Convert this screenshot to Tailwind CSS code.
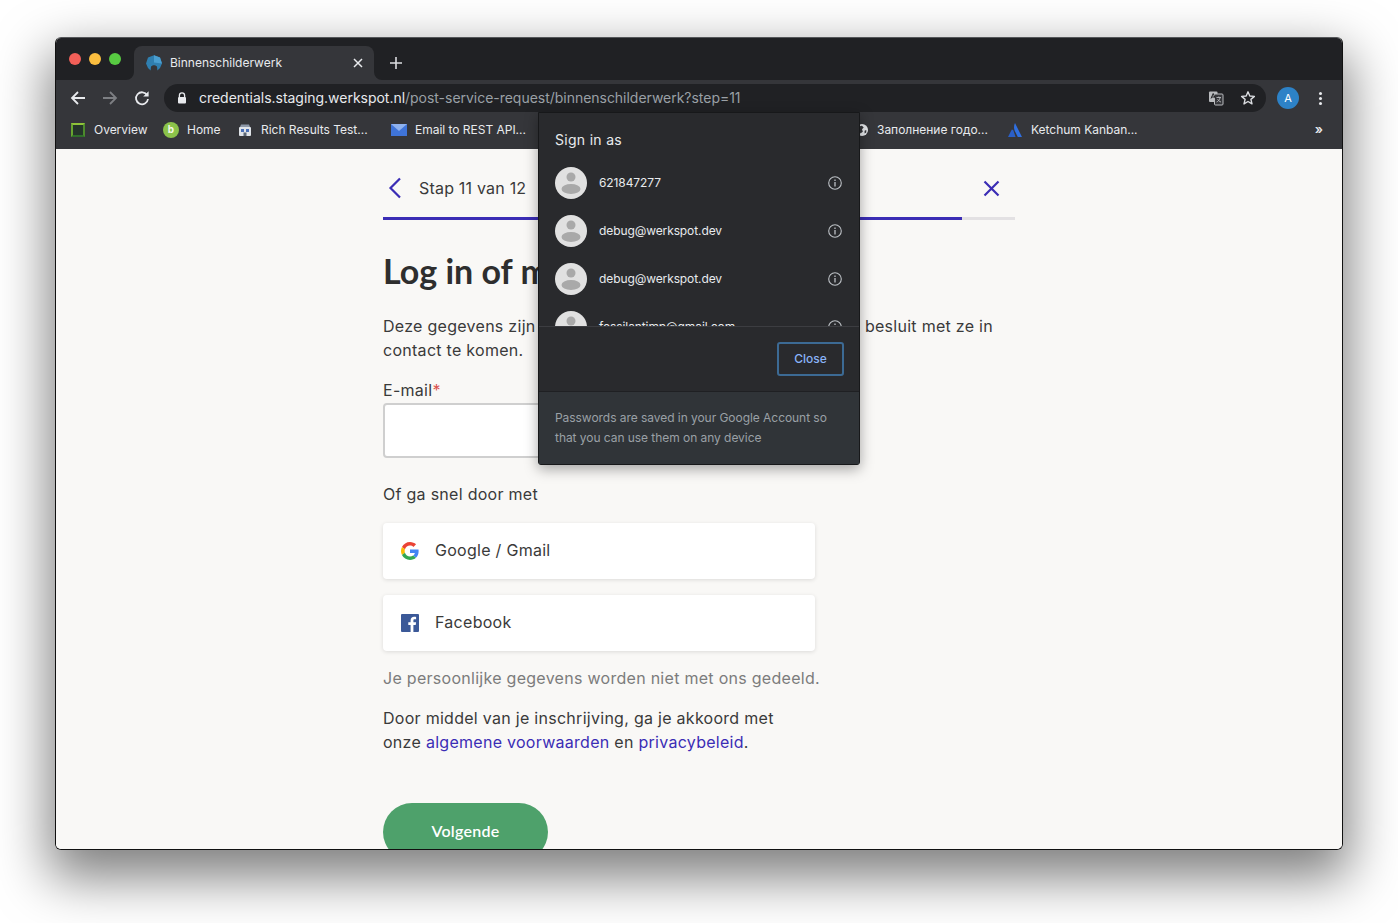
<!DOCTYPE html>
<html lang="en">
<head>
    <meta charset="UTF-8">
    <meta name="viewport" content="width=device-width, initial-scale=1.0">
    <title>Binnenschilderwerk</title>
    <script src="https://cdn.jsdelivr.net/npm/@tailwindcss/browser@4"></script>
</head>
<body class="bg-white h-[923px] overflow-hidden pt-[37px] font-['Inter',sans-serif]">
    <!-- Browser window -->
    <div class="relative mx-auto w-[1288px] h-[813px] flex flex-col rounded-[6px] overflow-hidden border border-[#111] border-t-[#55575a] shadow-[0_22px_52px_6px_rgba(0,0,0,0.5)]">

        <!-- Tab strip -->
        <div class="h-[42px] shrink-0 bg-[#202124] flex items-end">
            <div class="flex items-center gap-[8px] ml-[13px] mb-[15px] mr-[13px]">
                <span class="w-[12px] h-[12px] rounded-full bg-[#f25f58]"></span>
                <span class="w-[12px] h-[12px] rounded-full bg-[#fbbe3f]"></span>
                <span class="w-[12px] h-[12px] rounded-full bg-[#58cb42]"></span>
            </div>
            <div class="relative w-[240px] h-[34px] bg-[#35363a] rounded-t-[8px] flex items-center pl-[12px] pr-[11px] text-white">
                <svg class="absolute -left-[8px] bottom-0 w-[8px] h-[8px]" viewBox="0 0 8 8"><path d="M8 0V8H0A8 8 0 0 0 8 0Z" fill="#35363a"/></svg>
                <svg class="absolute -right-[8px] bottom-0 w-[8px] h-[8px]" viewBox="0 0 8 8"><path d="M0 0V8H8A8 8 0 0 1 0 0Z" fill="#35363a"/></svg>
                <svg class="w-[16px] h-[16px] shrink-0" viewBox="0 0 16 16"><path d="M8 0.2 14 2.6 16 8.400 14 13 11.400 15.400 11 11.400 9 10.200 7 10.200 5 11.400 4.600 15.400 2 13 0 8.400 2 2.600Z" fill="#2f7fb0"/><path d="M8 0.2 14 2.600 16 8.400 8 7.400Z" fill="#4a9ed0"/></svg>
                <span class="ml-[8px] text-[12px] text-[#e8eaed]">Binnenschilderwerk</span>
                <svg class="ml-auto w-[10px] h-[10px]" viewBox="0 0 10 10"><path d="M1 1 9 9M9 1 1 9" stroke="#e8eaed" stroke-width="1.500"/></svg>
            </div>
            <svg class="ml-[16px] mb-[11px] w-[12px] h-[12px]" viewBox="0 0 12 12"><path d="M6 0V12M0 6H12" stroke="#dcdde0" stroke-width="1.600"/></svg>
        </div>

        <!-- Toolbar -->
        <div class="h-[32px] shrink-0 bg-[#35363a] flex items-end">
            <div class="w-[108px] h-[28px] shrink-0 flex items-center pl-[14px] gap-[16px]">
                <svg class="w-[16px] h-[16px] shrink-0" viewBox="0 0 16 16"><path d="M15 8H2M8 2 2 8l6 6" fill="none" stroke="#e8eaed" stroke-width="1.800"/></svg>
                <svg class="w-[16px] h-[16px] shrink-0" viewBox="0 0 16 16"><path d="M1 8H14M8 2l6 6-6 6" fill="none" stroke="#7d7f83" stroke-width="1.800"/></svg>
                <svg class="w-[16px] h-[16px] shrink-0" viewBox="0 0 16 16"><path d="M13.200 5.200A6 6 0 1 0 14 9" fill="none" stroke="#e8eaed" stroke-width="1.800"/><path d="M14.600 1.200V6.600H9.200Z" fill="#e8eaed"/></svg>
            </div>
            <div class="w-[1102px] h-[28px] bg-[#202124] rounded-full flex items-center pl-[13px] pr-[10px]">
                <svg class="w-[10px] h-[12px] shrink-0" viewBox="0 0 10 12"><path d="M2.400 5V3.400a2.600 2.600 0 0 1 5.200 0V5" fill="none" stroke="#e8eaed" stroke-width="1.300"/><rect x="1" y="5" width="8" height="6.500" rx="1" fill="#e8eaed"/></svg>
                <span class="ml-[12px] mb-[2px] text-[14px] tracking-[-0.025px] text-[#e8eaed] whitespace-nowrap">credentials.staging.werkspot.nl<span class="text-[#9aa0a6]">/post-service-request/binnenschilderwerk?step=11</span></span>
                <svg class="ml-auto w-[16px] h-[16px] shrink-0" viewBox="0 0 16 16"><rect x="1" y="1.500" width="8.500" height="10.500" rx="1" fill="#b9bbbe"/><rect x="6.500" y="4" width="8.500" height="11" rx="1" fill="#35363a" stroke="#b9bbbe"/><path d="M3 8.500 5.200 3.500 7.400 8.500M3.800 7H6.600" fill="none" stroke="#202124"/><path d="M8.500 7.500H13M10.800 6.500V7.500M12.200 7.500C11.600 10 10 11.500 8.600 12M9.600 9.200C10.400 10.600 11.600 11.600 13 12" fill="none" stroke="#b9bbbe" stroke-width="0.900"/></svg>
                <svg class="ml-[16px] w-[16px] h-[16px] shrink-0" viewBox="0 0 16 16"><path d="M8 1.800 9.800 6l4.600.4-3.500 3 1.100 4.500L8 11.500l-4 2.400 1.100-4.500-3.500-3L6.200 6Z" fill="none" stroke="#dadce0" stroke-width="1.400" stroke-linejoin="round"/></svg>
            </div>
            <div class="flex-1 h-[28px] relative flex items-center pl-[11px]">
                <span class="w-[22px] h-[22px] rounded-full bg-[#2d82c7] text-white text-[11px] flex items-center justify-center">A</span>
                <span class="ml-[20px] flex flex-col gap-[2px]">
                    <span class="w-[3px] h-[3px] rounded-full bg-[#e8eaed]"></span>
                    <span class="w-[3px] h-[3px] rounded-full bg-[#e8eaed]"></span>
                    <span class="w-[3px] h-[3px] rounded-full bg-[#e8eaed]"></span>
                </span>
            </div>
        </div>

        <!-- Bookmarks bar -->
        <div class="h-[37px] shrink-0 bg-[#35363a] flex items-center pl-[15px] pb-[2px] text-[12px] tracking-[-0.02px] text-[#e8eaed] whitespace-nowrap">
            <div class="w-[92px] flex items-center shrink-0">
                <span class="w-[14px] h-[14px] border-[2px] border-l-[#67a52f] border-t-[#8fc33a] border-r-[#4d8b2c] border-b-[#2f6e2a] bg-[#24352a] shrink-0"></span>
                <span class="ml-[9px]">Overview</span>
            </div>
            <div class="w-[75px] flex items-center shrink-0">
                <span class="w-[16px] h-[16px] rounded-full bg-[#8bc34a] text-[#f4f8e8] text-[10px] font-bold flex items-center justify-center shrink-0">b</span>
                <span class="ml-[8px]">Home</span>
            </div>
            <div class="w-[153px] flex items-center shrink-0">
                <svg class="w-[14px] h-[14px] shrink-0" viewBox="0 0 14 14"><path d="M2 4 3 1.500H11L12 4Z" fill="#8d98a8"/><rect x="1" y="4" width="12" height="9" rx="1" fill="#dfe3e8"/><rect x="3" y="6" width="3" height="3" fill="#4a6fb5"/><rect x="8" y="6" width="3" height="3" fill="#4a6fb5"/><rect x="5.500" y="9.500" width="3" height="3.500" fill="#5b6675"/></svg>
                <span class="ml-[9px]">Rich Results Test...</span>
            </div>
            <div class="w-[465px] flex items-center shrink-0">
                <svg class="w-[16px] h-[12px] shrink-0" viewBox="0 0 16 12"><rect width="16" height="12" fill="#3f74d8"/><path d="M0 0 8 7 16 0" fill="#8fb2ee"/></svg>
                <span class="ml-[8px]">Email to REST API...</span>
            </div>
            <div class="w-[152px] flex items-center shrink-0">
                <svg class="w-[12px] h-[14px] shrink-0" viewBox="0 0 14 14"><circle cx="7" cy="7" r="7" fill="#e8eaed"/><path d="M3 3 7 2 9 4 7 6 8 9 5 11 4 7 2 6ZM10 8 12 7 12 10 10 11Z" fill="#35363a"/></svg>
                <span class="ml-[9px]">Заполнение годо...</span>
            </div>
            <div class="flex items-center shrink-0">
                <svg class="w-[14px] h-[14px] shrink-0" viewBox="0 0 14 14"><path d="M7 0C5.600 3 5.600 6 7.600 9.500L9.800 14H14Z" fill="#2f6fe0"/><path d="M3.800 6.500 0 14H7.600L5.200 7Z" fill="#2a5fc8"/></svg>
                <span class="ml-[9px]">Ketchum Kanban...</span>
            </div>
            <span class="ml-auto mr-[19px] text-[13px] font-semibold text-[#e8eaed]">»</span>
        </div>

        <!-- Page -->
        <div class="flex-1 min-h-0 overflow-hidden bg-[#f9f8f6]">
            <div class="mx-auto w-[632px] text-[16px] leading-[24px] tracking-[0.28px] text-[#3a3a3a]">
                <div class="h-[68px] pt-[10px] flex items-center">
                    <svg class="w-[14px] h-[22px] ml-[5px]" viewBox="0 0 14 22"><path d="M12 1.500 2.500 11l9.500 9.500" fill="none" stroke="#3b2db5" stroke-width="2.200"/></svg>
                    <span class="ml-[17px] tracking-[0.2px]">Stap 11 van 12</span>
                    <svg class="ml-auto mr-[15px] w-[17px] h-[17px]" viewBox="0 0 17 17"><path d="M1.500 1.500 15.500 15.500M15.500 1.500 1.500 15.500" stroke="#3b2db5" stroke-width="2.200"/></svg>
                </div>
                <div class="h-[3px] bg-[#e3e1e3]"><div class="w-[579px] h-[3px] bg-[#3b2db5]"></div></div>

                <h1 class="mt-[29px] text-[34px] leading-[44px] tracking-normal font-bold text-[#2e2e2e] font-['Lato',sans-serif]">Log in of maak een account</h1>
                <div class="mt-[21px] flex justify-between whitespace-nowrap pr-[22px]"><span>Deze gegevens zijn</span><span>besluit met ze in</span></div>
                <p>contact te komen.</p>

                <label class="block mt-[16px]">E-mail<span class="text-[#d9534f]">*</span></label>
                <div class="w-[432px] h-[55px] mt-[1px] bg-white border-2 border-[#cfcfcf] rounded-[4px]"></div>

                <p class="mt-[24px]">Of ga snel door met</p>
                <div class="w-[432px] mt-[17px] flex flex-col gap-[16px]">
                    <div class="h-[56px] bg-white rounded-[4px] shadow-[0_1px_4px_rgba(0,0,0,0.12)] flex items-center pl-[18px]">
                        <svg class="w-[18px] h-[18px]" viewBox="0 0 48 48"><path fill="#EA4335" d="M24 9.500c3.540 0 6.710 1.220 9.210 3.600l6.850-6.850C35.900 2.380 30.470 0 24 0 14.620 0 6.510 5.380 2.560 13.220l7.980 6.190C12.430 13.720 17.740 9.500 24 9.500z"/><path fill="#4285F4" d="M46.980 24.550c0-1.570-.15-3.090-.38-4.550H24v9.020h12.940c-.58 2.960-2.260 5.480-4.780 7.180l7.730 6c4.510-4.180 7.090-10.360 7.090-17.650z"/><path fill="#FBBC05" d="M10.530 28.590c-.48-1.450-.76-2.990-.76-4.590s.27-3.140.76-4.590l-7.980-6.190C.92 16.460 0 20.120 0 24c0 3.880.92 7.540 2.560 10.780l7.970-6.190z"/><path fill="#34A853" d="M24 48c6.480 0 11.930-2.130 15.890-5.810l-7.730-6c-2.150 1.450-4.920 2.300-8.160 2.300-6.260 0-11.570-4.220-13.470-9.910l-7.980 6.190C6.510 42.620 14.620 48 24 48z"/></svg>
                        <span class="ml-[16px] mb-[2px]">Google / Gmail</span>
                    </div>
                    <div class="h-[56px] bg-white rounded-[4px] shadow-[0_1px_4px_rgba(0,0,0,0.12)] flex items-center pl-[18px]">
                        <svg class="w-[18px] h-[18px]" viewBox="0 0 18 18"><rect width="18" height="18" rx="1" fill="#3b5998"/><path d="M12.400 18V11h2.300l.4-2.700h-2.700V6.600c0-.8.200-1.300 1.300-1.300h1.400V2.900c-.3 0-1.100-.1-2-.1-2.100 0-3.500 1.300-3.500 3.600v1.900H7.300V11h2.300v7Z" fill="#fff"/></svg>
                        <span class="ml-[16px] mb-[2px]">Facebook</span>
                    </div>
                </div>

                <p class="mt-[15px] text-[#7c7c7c] whitespace-nowrap">Je persoonlijke gegevens worden niet met ons gedeeld.</p>
                <p class="mt-[16px]">Door middel van je inschrijving, ga je akkoord met<br>onze <a class="text-[#3b2db5]">algemene voorwaarden</a> en <a class="text-[#3b2db5]">privacybeleid</a>.</p>
                <button class="mt-[49px] w-[165px] h-[58px] rounded-full bg-[#4ea16b] text-white font-semibold font-['Lato',sans-serif] pb-[2px]">Volgende</button>
            </div>
        </div>

        <!-- Password manager popup -->
        <div class="absolute left-[482px] top-[74px] w-[322px] h-[353px] bg-[#292a2d] border border-[#17181a] rounded-b-[3px] shadow-[0_4px_14px_rgba(0,0,0,0.35)] flex flex-col text-[#e8eaed]">
            <div class="text-[14px] tracking-[0.3px] pl-[16px] pt-[18px] leading-[18px]">Sign in as</div>
            <div class="h-[168px] mt-[10px] shrink-0 overflow-hidden border-b border-[#3c3d41] text-[12px] tracking-[-0.1px]">
                <div class="h-[48px] flex items-center pl-[16px] pr-[17px]">
                    <svg class="w-[32px] h-[32px] shrink-0" viewBox="0 0 32 32"><circle cx="16" cy="16" r="16" fill="#e1e1e1"/><circle cx="16" cy="10" r="4.500" fill="#a9a9a9"/><ellipse cx="16" cy="22" rx="9.500" ry="5" fill="#a9a9a9"/></svg>
                    <span class="ml-[12px]">621847277</span>
                    <svg class="ml-auto w-[14px] h-[14px]" viewBox="0 0 14 14"><circle cx="7" cy="7" r="6.300" fill="none" stroke="#bdc1c6" stroke-width="1.100"/><path d="M7 6V10.500M7 3.500V5" stroke="#bdc1c6" stroke-width="1.300"/></svg>
                </div>
                <div class="h-[48px] flex items-center pl-[16px] pr-[17px]">
                    <svg class="w-[32px] h-[32px] shrink-0" viewBox="0 0 32 32"><circle cx="16" cy="16" r="16" fill="#e1e1e1"/><circle cx="16" cy="10" r="4.500" fill="#a9a9a9"/><ellipse cx="16" cy="22" rx="9.500" ry="5" fill="#a9a9a9"/></svg>
                    <span class="ml-[12px]">debug@werkspot.dev</span>
                    <svg class="ml-auto w-[14px] h-[14px]" viewBox="0 0 14 14"><circle cx="7" cy="7" r="6.300" fill="none" stroke="#bdc1c6" stroke-width="1.100"/><path d="M7 6V10.500M7 3.500V5" stroke="#bdc1c6" stroke-width="1.300"/></svg>
                </div>
                <div class="h-[48px] flex items-center pl-[16px] pr-[17px]">
                    <svg class="w-[32px] h-[32px] shrink-0" viewBox="0 0 32 32"><circle cx="16" cy="16" r="16" fill="#e1e1e1"/><circle cx="16" cy="10" r="4.500" fill="#a9a9a9"/><ellipse cx="16" cy="22" rx="9.500" ry="5" fill="#a9a9a9"/></svg>
                    <span class="ml-[12px]">debug@werkspot.dev</span>
                    <svg class="ml-auto w-[14px] h-[14px]" viewBox="0 0 14 14"><circle cx="7" cy="7" r="6.300" fill="none" stroke="#bdc1c6" stroke-width="1.100"/><path d="M7 6V10.500M7 3.500V5" stroke="#bdc1c6" stroke-width="1.300"/></svg>
                </div>
                <div class="h-[48px] flex items-center pl-[16px] pr-[17px]">
                    <svg class="w-[32px] h-[32px] shrink-0" viewBox="0 0 32 32"><circle cx="16" cy="16" r="16" fill="#e1e1e1"/><circle cx="16" cy="10" r="4.500" fill="#a9a9a9"/><ellipse cx="16" cy="22" rx="9.500" ry="5" fill="#a9a9a9"/></svg>
                    <span class="ml-[12px]">fossilantimp@gmail.com</span>
                    <svg class="ml-auto w-[14px] h-[14px]" viewBox="0 0 14 14"><circle cx="7" cy="7" r="6.300" fill="none" stroke="#bdc1c6" stroke-width="1.100"/><path d="M7 6V10.500M7 3.500V5" stroke="#bdc1c6" stroke-width="1.300"/></svg>
                </div>
            </div>
            <div class="h-[64px] shrink-0 flex items-center justify-end pr-[15px]">
                <button class="w-[67px] h-[34px] border-2 border-[#3c6a94] rounded-[3px] text-[12px] font-medium text-[#8ab4f8]">Close</button>
            </div>
            <div class="flex-1 bg-[#303438] border-t border-[#1f2023] pl-[16px] pt-[16px] text-[12px] tracking-[-0.05px] leading-[20px] text-[#9aa0a6]">Passwords are saved in your Google Account so<br>that you can use them on any device</div>
        </div>
    </div>
</body>
</html>
